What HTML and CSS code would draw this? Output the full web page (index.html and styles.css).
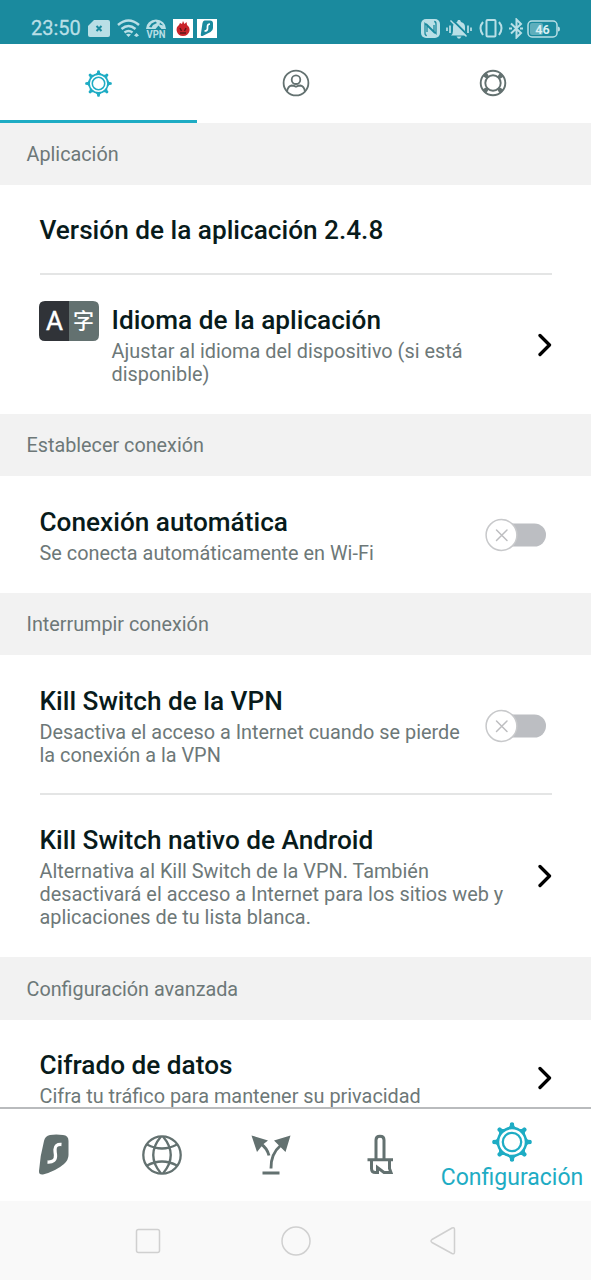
FILE: index.html
```html
<!DOCTYPE html>
<html lang="es">
<head>
<meta charset="utf-8">
<title>Configuración</title>
<link rel="stylesheet" href="styles.css">
</head>
<body>
<svg class="defs" width="0" height="0" aria-hidden="true">
  <symbol id="gear" viewBox="-20 -20 40 40">
    <g fill="none" stroke="currentColor">
      <circle r="14" stroke-width="2.500"/>
      <circle r="9.200" stroke-width="2.300"/>
    </g>
    <g fill="currentColor">
      <path id="tooth" d="M-4.500-14-2.300-16-1.900-19Q0-20.600 1.900-19L2.300-16 4.500-14Z"/>
      <use href="#tooth" transform="rotate(45)"/><use href="#tooth" transform="rotate(90)"/>
      <use href="#tooth" transform="rotate(135)"/><use href="#tooth" transform="rotate(180)"/>
      <use href="#tooth" transform="rotate(225)"/><use href="#tooth" transform="rotate(270)"/>
      <use href="#tooth" transform="rotate(315)"/>
    </g>
  </symbol>
  <symbol id="chevron" viewBox="0 0 14 24">
    <path d="M2 2.500 11.500 12 2 21.500" fill="none" stroke="#000" stroke-width="3.300" stroke-linecap="round" stroke-linejoin="round"/>
  </symbol>
  <symbol id="toggle" viewBox="0 0 62 34">
    <rect x="14" y="5.500" width="47" height="23" rx="11.500" fill="#bcbec2"/>
    <circle cx="16.500" cy="17" r="15.400" fill="#fff" stroke="#c8c9cb" stroke-width="1.500"/>
    <path d="M11.500 12 22 22.500M22 12 11.500 22.500" stroke="#bdbec0" stroke-width="1.500" stroke-linecap="round"/>
  </symbol>
</svg>

<header class="status">
  <span class="clock">23:50</span>
  <svg class="sim" width="22" height="17" viewBox="0 0 22 17"><path d="M6 0H20Q22 0 22 2V15Q22 17 20 17H2Q0 17 0 15V6Z" fill="#b9dfe6"/><path d="M8.500 6 13.500 11M13.500 6 8.500 11" stroke="#1a8a9e" stroke-width="2"/></svg>
  <svg class="wifi" width="24" height="19" viewBox="0 0 24 19"><g fill="none" stroke="#b9dfe6" stroke-width="2.500"><path d="M1 6Q11.500-3 22 6"/><path d="M4.500 10Q11.500 4 18.500 10"/><path d="M7.500 13.500Q11.500 10.500 15.500 13.500"/></g><path d="M9 15.500Q11.500 14 14 15.500L11.500 18ZM17 16.500 19.500 14 22 16.500 19.500 18Z" fill="#b9dfe6"/></svg>
  <svg class="vpn" width="20" height="24" viewBox="0 -2 20 24"><path d="M0 10A10 9.500 0 0 1 20 10H15.500L12.500 6.500 9.500 10Z" fill="#b9dfe6"/><path d="M3 8 5.500 4.500 9.500 2.500 11 4 7 6 5.500 8.500ZM14 3.500 17.500 6.500 13.500 5.500Z" fill="#1a8a9e"/><text x="10" y="19" text-anchor="middle" textLength="19" lengthAdjust="spacingAndGlyphs" class="vpn-text">VPN</text></svg>
  <svg class="app" width="20" height="19" viewBox="0 0 20 19"><rect width="20" height="19" fill="#fff"/><path d="M10 2 11.500 5 13.500 3 14 6Q17 8 16.500 12 15 17 10 17 5 17 3.700 12 3 8 6 6L7 4 9 5Z" fill="#c9242b"/><path d="M7 9 8.500 12M13 9 11.500 12M7 14H13" stroke="#5d171b" stroke-width="1.500"/></svg>
  <svg class="app app-last" width="20" height="19" viewBox="0 0 20 19"><rect width="20" height="19" fill="#fff"/><path d="M7.500 1.500H13Q16 1.500 16 4.500V9Q16 11.500 13.500 13L5.500 17Q3.500 17.500 3.800 15.500L5.500 4Q6 1.500 7.500 1.500Z" fill="#1a8a9e"/><path d="M13 5Q10.500 5 10.500 7.500V9.500Q10.500 12 7.500 12" fill="none" stroke="#fff" stroke-width="1.700"/></svg>
  <svg class="nfc" width="19" height="19" viewBox="0 0 19 19"><rect width="19" height="19" rx="5" fill="#b9dfe6"/><path d="M5.800 16.500Q4 16.500 4 14V4.500L13 13.500V6M13.200 2.500Q15 2.500 15 5V14.500L6 5.500V13" fill="none" stroke="#1a8a9e" stroke-width="1.300"/></svg>
  <svg class="mute" width="26" height="20" viewBox="0 0 26 20"><path d="M5 16.500Q7 15 7 12V8Q7 4 11 3L12 1H14L15 3Q19 4 19 8V12Q19 15 21 16.500ZM10.500 17.500H15.500L14 19.500H12Z" fill="#b9dfe6"/><path d="M5.500 0 23 17.500" stroke="#1a8a9e" stroke-width="2"/><path d="M4.500 1.500 20.500 17.500" stroke="#b9dfe6" stroke-width="1.500"/><path d="M1 8.500V12M4 6.500V14M22 6.500V14M25 8.500V12" stroke="#b9dfe6" stroke-width="1.700"/></svg>
  <svg class="vibrate" width="24" height="19" viewBox="0 0 24 19"><g fill="none" stroke="#b9dfe6" stroke-width="2"><rect x="7.500" y="1" width="9" height="16.500" rx="1"/><path d="M4 3Q-1 9 4 16M20 3Q25 9 20 16"/></g></svg>
  <svg class="bluetooth" width="14" height="21" viewBox="0 0 14 21"><path d="M2 5.500 12 15 7.500 19.500V1.500L12 6 2 15.500" fill="none" stroke="#b9dfe6" stroke-width="2"/><path d="M0 10.500H3M11 10.500H14" stroke="#b9dfe6" stroke-width="2"/></svg>
  <svg class="battery" width="33" height="18" viewBox="0 0 33 18"><rect x="3" y="3" width="13" height="12" rx="2" fill="#5eaebc"/><rect x="1" y="1" width="29" height="16" rx="4" fill="none" stroke="#b9dfe6" stroke-width="1.500"/><path d="M31 6.500Q33 6.500 33 9T31 11.500Z" fill="#b9dfe6"/><text x="15.500" y="13.500" text-anchor="middle" class="battery-text">46</text></svg>
</header>

<nav class="tabs">
  <div class="tab tab-active"><svg width="27" height="27"><use href="#gear"/></svg></div>
  <div class="tab"><svg width="28" height="28" viewBox="0 0 28 28"><g fill="none" stroke="currentColor" stroke-width="1.800"><circle cx="14" cy="14" r="12.400"/><circle cx="14" cy="10.700" r="4.300"/><path d="M5 22.500Q6 17 9.500 16.500 11.500 16.500 14 17.800 16.500 16.500 18.500 16.500 22 17 23 22.500"/></g></svg></div>
  <div class="tab"><svg width="28" height="28" viewBox="0 0 28 28"><g fill="none" stroke="currentColor"><circle cx="14" cy="14" r="12.300" stroke-width="1.900"/><circle cx="14" cy="14" r="7.700" stroke-width="1.900"/><circle cx="14" cy="14" r="10" stroke-width="5" stroke-dasharray="4.200 11.508" stroke-dashoffset="-5.754"/></g></svg></div>
</nav>

<main class="content">
  <h2 class="section">Aplicación</h2>
  <div class="group">
    <div class="row row-single"><h3>Versión de la aplicación 2.4.8</h3></div>
    <div class="row row-divided">
      <svg class="language" width="60" height="40" viewBox="0 0 60 40"><path d="M6 0H30V40H6Q0 40 0 34V6Q0 0 6 0Z" fill="#303338"/><path d="M30 0H54Q60 0 60 6V34Q60 40 54 40H30Z" fill="#637170"/><text x="15.500" y="28.500" text-anchor="middle" class="latin">A</text><text x="44.500" y="26.500" text-anchor="middle" class="cjk">字</text></svg>
      <div class="text"><h3>Idioma de la aplicación</h3><p>Ajustar al idioma del dispositivo (si está<br>disponible)</p></div>
      <svg class="chevron" width="14" height="24"><use href="#chevron"/></svg>
    </div>
  </div>

  <h2 class="section">Establecer conexión</h2>
  <div class="group">
    <div class="row row-auto">
      <div class="text"><h3>Conexión automática</h3><p>Se conecta automáticamente en Wi-Fi</p></div>
      <svg class="toggle" width="62" height="34"><use href="#toggle"/></svg>
    </div>
  </div>

  <h2 class="section">Interrumpir conexión</h2>
  <div class="group">
    <div class="row row-kill">
      <div class="text"><h3>Kill Switch de la VPN</h3><p>Desactiva el acceso a Internet cuando se pierde<br>la conexión a la VPN</p></div>
      <svg class="toggle" width="62" height="34"><use href="#toggle"/></svg>
    </div>
    <div class="row row-divided">
      <div class="text"><h3>Kill Switch nativo de Android</h3><p>Alternativa al Kill Switch de la VPN. También<br>desactivará el acceso a Internet para los sitios web y<br>aplicaciones de tu lista blanca.</p></div>
      <svg class="chevron" width="14" height="24"><use href="#chevron"/></svg>
    </div>
  </div>

  <h2 class="section section-tall">Configuración avanzada</h2>
  <div class="group">
    <div class="row row-last">
      <div class="text"><h3>Cifrado de datos</h3><p>Cifra tu tráfico para mantener su privacidad</p></div>
      <svg class="chevron" width="14" height="24"><use href="#chevron"/></svg>
    </div>
  </div>
</main>

<nav class="bottom">
  <div class="item"><svg width="32" height="42" viewBox="0 0 32 42"><path d="M12 1Q18 0 25 1 30.500 1.500 30.500 7V21Q30.500 26 26 30 18 37 5 40.500 .700 41 1 37 2 22 6 7 7 2 12 1Z" fill="currentColor"/><path d="M23.500 10.500Q17 10 17 15.500 17 18 17.500 21 18 28.500 9.500 28" fill="none" stroke="#fff" stroke-width="3.300"/></svg></div>
  <div class="item"><svg width="42" height="42" viewBox="0 0 42 42"><g fill="none" stroke="currentColor" stroke-width="2.300"><circle cx="21" cy="21" r="18.700"/><path d="M20 2.500Q4.500 21 20 39.500M22 2.500Q37.500 21 22 39.500M6 10.500Q21 18.500 36 10.500M6 31.500Q21 23.500 36 31.500"/></g></svg></div>
  <div class="item"><svg width="42" height="42" viewBox="0 0 42 42"><path d="M1.500 1.500 18 6.500 13.500 10 11 13 7 18ZM40.500 1.500 24 6.500 35.500 18Z" fill="currentColor"/><g fill="none" stroke="currentColor" stroke-width="2.900"><path d="M11 10Q17 14 19 21.500M31 11Q20.500 20 21 34.500M12.500 39H29.500"/></g></svg></div>
  <div class="item item-knife"><svg width="28" height="42" viewBox="0 0 28 42"><g fill="none" stroke="currentColor" stroke-width="3"><path d="M10 25V6Q10 2.300 14 2.300T18 6V25M1.500 25.800H27M5.500 26V34.500Q5.500 38.500 9.500 38.500H11.500V33.500L18 38.500H25L23.500 34.500V26"/></g></svg></div>
  <div class="item item-active"><svg width="40" height="40"><use href="#gear"/></svg><span>Configuración</span></div>
</nav>

<footer class="system">
  <svg width="26" height="26" viewBox="0 0 26 26"><rect x="1.500" y="1.500" width="23" height="23" rx="2"/></svg>
  <svg width="30" height="30" viewBox="0 0 30 30"><circle cx="15" cy="15" r="14"/></svg>
  <svg width="26" height="30" viewBox="0 0 26 30"><path d="M22 2Q24.500 1 24.500 3.500V26Q24.500 28.500 22 27.500L2 16.500Q0 15 2 13.500Z"/></svg>
</footer>
</body>
</html>
```

FILE: styles.css
```css
* { box-sizing: border-box; }
body {
  margin: 0;
  width: 591px;
  height: 1280px;
  display: flex;
  flex-direction: column;
  overflow: hidden;
  background: #fff;
  color: #081b1b;
  font-family: Roboto, sans-serif;
}
svg { display: block; flex: none; }
.defs { position: absolute; }
h2, h3, p { margin: 0; }

.status {
  flex: none;
  height: 44px;
  padding: 13px 31px 0;
  display: flex;
  align-items: center;
  background: #1a8a9e;
}
.clock { width: 49px; margin-right: 8px; color: #b9dfe6; font-size: 20px; line-height: 31px; white-space: nowrap; -webkit-text-stroke: 0.3px #b9dfe6; }
.wifi { margin-left: 7px; }
.vpn { margin-left: 5px; }
.vpn-text { font: bold 10px Roboto, sans-serif; fill: #b9dfe6; }
.app { margin-left: 7px; }
.app-last { margin-left: 4px; }
.nfc { margin-left: auto; }
.mute { margin-left: 6px; }
.vibrate { margin-left: 7px; }
.bluetooth { margin-left: 6px; }
.battery { margin-left: 4px; }
.battery-text { font: bold 12.5px Roboto, sans-serif; fill: #d9eff3; }

.tabs { flex: none; height: 79px; display: flex; color: #637170; }
.tab { flex: 1; display: flex; align-items: center; justify-content: center; padding-top: 2px; border-bottom: 3px solid transparent; }
.tab-active { color: #1eacc4; border-color: #1eacc4; }

.content { flex: 1; min-height: 0; overflow: hidden; }
.section {
  height: 62px;
  padding-left: 26.5px;
  background: #f2f2f2;
  color: #6d7878;
  font-size: 19.8px;
  font-weight: 400;
  line-height: 64px;
}
.section-tall { height: 63px; line-height: 65px; }
.group { padding: 0 39.5px; }
.row { display: flex; align-items: center; padding: 30px 0 28px; }
.row-single { padding-bottom: 27px; }
.row-auto { padding: 31px 0 28px; }
.row-kill { padding: 31px 0 26px; }
.row-last { padding-bottom: 0; }
.row-divided { border-top: 2px solid #e4e5e5; }
.text { flex: 1; }
h3 { font-size: 26.2px; font-weight: 500; line-height: 31px; white-space: nowrap; }
p { margin-top: 4px; color: #6d7878; font-size: 19.88px; line-height: 23px; white-space: nowrap; }
.language { align-self: flex-start; margin: -4px 12.5px 0 -0.5px; }
.chevron { margin: 0 -0.5px 2px 0; }
.toggle { margin: 0 4.5px 2px 0; }
.latin { font: 400 26px Roboto, sans-serif; fill: #fff; stroke: #fff; stroke-width: 0.4px; }
.cjk { font: 500 21px "Noto Sans CJK SC", sans-serif; fill: #fff; }

.bottom {
  flex: none;
  height: 94px;
  display: grid;
  grid-template-columns: 108px 108px 109px 108px 158px;
  border-top: 2px solid #b9bbbd;
  color: #637170;
}
.item { display: flex; flex-direction: column; align-items: center; justify-content: center; }
.item-knife { padding-left: 2px; }
.item-active { justify-content: flex-start; padding-top: 13px; color: #1eacc4; font-size: 23px; line-height: 31px; }

.system {
  flex: none;
  height: 79px;
  padding: 0 135px;
  display: flex;
  align-items: center;
  justify-content: space-between;
  background: #f9f9f9;
  fill: none;
  stroke: #d0d0d0;
  stroke-width: 1.5px;
}
```
